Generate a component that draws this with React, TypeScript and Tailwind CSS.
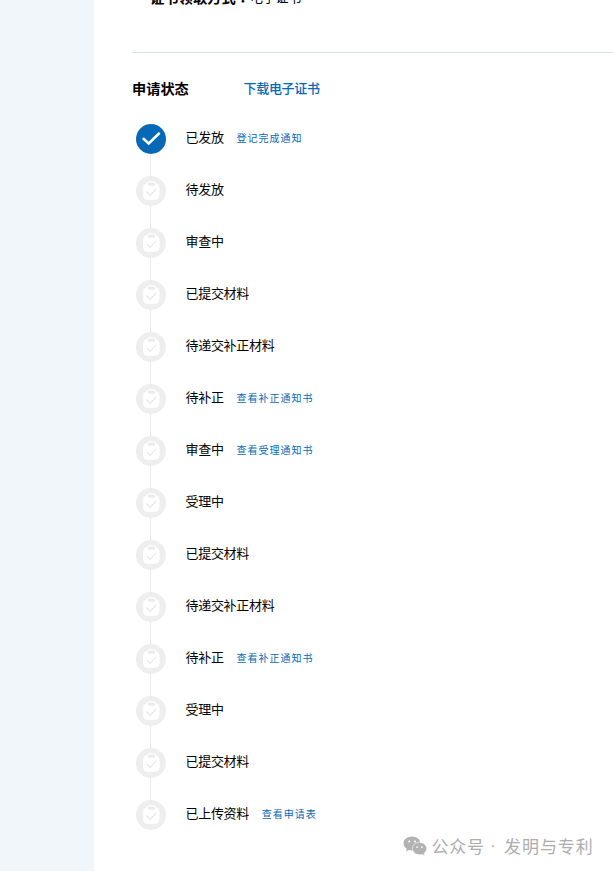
const steps: { label: string; link?: string; done?: boolean }[] = [
  { label: '已发放', link: '登记完成通知', done: true },
  { label: '待发放' },
  { label: '审查中' },
  { label: '已提交材料' },
  { label: '待递交补正材料' },
  { label: '待补正', link: '查看补正通知书' },
  { label: '审查中', link: '查看受理通知书' },
  { label: '受理中' },
  { label: '已提交材料' },
  { label: '待递交补正材料' },
  { label: '待补正', link: '查看补正通知书' },
  { label: '受理中' },
  { label: '已提交材料' },
  { label: '已上传资料', link: '查看申请表' },
];

function DoneIcon() {
  return (
    <svg className="block size-[30px]" viewBox="0 0 30 30" fill="none">
      <circle cx="15" cy="15" r="15" fill="#0569b8" />
      <path d="M7.500 14.800l5.200 4.700L23 9.500" stroke="#fff" strokeWidth="2.500" strokeLinecap="round" />
    </svg>
  );
}

function PendingIcon() {
  return (
    <svg className="block size-[30px]" viewBox="0 0 30 30" fill="none">
      <circle cx="15" cy="15" r="15" fill="#eee" />
      <rect x="7.200" y="7.200" width="16.300" height="16.600" rx="4.500" fill="#fff" />
      <rect x="11" y="5.200" width="9" height="6" rx="2" fill="#fff" />
      <rect x="12" y="6.500" width="7" height="3.300" rx="1.400" fill="#ebebeb" />
      <path d="M10.800 16l3.500 3.400 5.600-6.400" stroke="#e6e6e6" strokeWidth="1.100" strokeLinecap="round" />
    </svg>
  );
}

function WeChatIcon() {
  return (
    <svg className="h-[20px] w-[24px]" viewBox="0 0 24 20">
      <path fill="#b2b2b2" d="M9 .6C4.300.6.500 3.600.500 7.400c0 2.200 1.300 4.200 3.200 5.400L2.900 15.600l3.100-1.600c1 .3 2 .4 3 .4 4.700 0 8.400-3 8.400-6.900S13.700.6 9 .6z" />
      <circle cx="6.300" cy="5.400" r="1" fill="#fff" />
      <circle cx="12" cy="5.400" r="1" fill="#fff" />
      <path fill="#b2b2b2" stroke="#fff" strokeWidth=".6" d="M16.500 6.400c-4 0-7.100 2.800-7.100 6.200s3.100 6.200 7.100 6.200c.9 0 1.800-.1 2.600-.4l2.600 1.300-.6-2.400c1.600-1.100 2.600-2.800 2.600-4.700 0-3.400-3.200-6.200-7.200-6.200z" />
      <circle cx="14.100" cy="11.100" r=".9" fill="#fff" />
      <circle cx="18.900" cy="11.100" r=".9" fill="#fff" />
    </svg>
  );
}

export default function App() {
  return (
    <div className="flex h-[871px] w-full overflow-hidden bg-white font-['Noto_Sans_CJK_SC',sans-serif] text-black">
      <aside className="w-[94px] shrink-0 bg-[#f1f6fa]" />
      <main className="flex min-w-0 flex-1 flex-col pl-[38px]">
        <div className="flex h-[53px] shrink-0 items-start border-b border-[#dbe3e5] pl-[18px]">
          <div className="-mt-[13px] flex h-5 items-center whitespace-nowrap leading-5">
            <span className="w-[100px] text-[14.300px] font-bold">
              证书领取方式<span className="font-['Noto_Sans_CJK_TC',sans-serif]" lang="zh-TW">：</span>
            </span>
            <span className="text-[13px] tracking-[-0.200px]">电子证书</span>
          </div>
        </div>
        <div className="mt-[25px] flex h-5 shrink-0 items-center whitespace-nowrap leading-5">
          <h2 className="w-[111.500px] text-[14.200px] font-bold">申请状态</h2>
          <a className="text-[13px] font-medium tracking-[-0.300px] text-[#0569b8]">下载电子证书</a>
        </div>
        <ol className="mt-[26px] ml-[3.500px] shrink-0">
          {steps.map((step, i) => (
            <li key={i} className="flex h-[52px] items-start">
              <div className="flex h-full w-[30px] flex-col items-center">
                {step.done ? <DoneIcon /> : <PendingIcon />}
                {i < steps.length - 1 && <div className="w-px flex-1 bg-[#eaeaea]" />}
              </div>
              <div className="ml-[20px] flex h-[25px] items-center whitespace-nowrap">
                <span className="text-[13px] tracking-[-0.300px]">{step.label}</span>
                {step.link && (
                  <a className="mt-[2px] ml-[12.800px] text-[10px] tracking-[1px] text-[#0569b8]">{step.link}</a>
                )}
              </div>
            </li>
          ))}
        </ol>
        <footer className="-mt-[16px] flex h-[20px] shrink-0 items-center whitespace-nowrap pl-[271px] text-[#adadad]">
          <WeChatIcon />
          <span className="ml-[4.500px] text-[17px] tracking-[0.700px]">公众号</span>
          <span className="w-[19.500px] pr-[3px] text-center font-['Liberation_Sans',sans-serif] text-[17px]">·</span>
          <span className="text-[17px] tracking-[0.900px]">发明与专利</span>
        </footer>
      </main>
    </div>
  );
}
